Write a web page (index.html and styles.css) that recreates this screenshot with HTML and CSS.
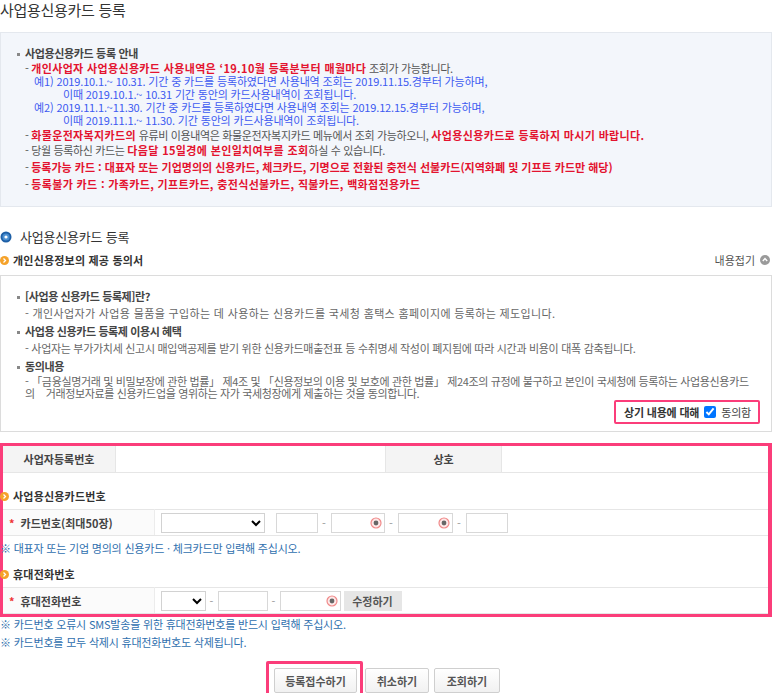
FILE: index.html
```html
<!DOCTYPE html>
<html lang="ko">
<head>
    <meta charset="UTF-8">
    <title>사업용신용카드 등록</title>
    <link rel="stylesheet" href="styles.css">
</head>
<body>
<div class="wrap">
    <h1 class="page-title">사업용신용카드 등록</h1>

    <!-- 안내 박스 -->
    <div class="notice-box">
        <p class="head"><span class="dot"></span>사업용신용카드 등록 안내</p>
        <ul class="dash-list">
            <li class="first">
                - <span class="red">개인사업자 사업용신용카드 사용내역은 ‘19.10월 등록분부터 매월마다</span> 조회가 가능합니다.
                <p class="blue">예1) 2019.10.1.~ 10.31. 기간 중 카드를 등록하였다면 사용내역 조회는 2019.11.15.경부터 가능하며,</p>
                <p class="blue indent">이때 2019.10.1.~ 10.31 기간 동안의 카드사용내역이 조회됩니다.</p>
                <p class="blue">예2) 2019.11.1.~11.30. 기간 중 카드를 등록하였다면 사용내역 조회는 2019.12.15.경부터 가능하며,</p>
                <p class="blue indent">이때 2019.11.1.~ 11.30. 기간 동안의 카드사용내역이 조회됩니다.</p>
            </li>
            <li>- <span class="red">화물운전자복지카드의</span> 유류비 이용내역은 화물운전자복지카드 메뉴에서 조회 가능하오니, <span class="red">사업용신용카드로 등록하지 마시기 바랍니다.</span></li>
            <li>- 당월 등록하신 카드는 <span class="red">다음달 15일경에 본인일치여부를 조회</span>하실 수 있습니다.</li>
            <li class="gap">- <span class="red tight">등록가능 카드 : 대표자 또는 기업명의의 신용카드, 체크카드, 기명으로 전환된 충전식 선불카드(지역화폐 및 기프트 카드만 해당)</span></li>
            <li class="gap">- <span class="red">등록불가 카드 : 가족카드, 기프트카드, 충전식선불카드, 직불카드, 백화점전용카드</span></li>
        </ul>
    </div>

    <h2 class="section-title">
        <svg width="12" height="12" viewBox="0 0 12 12"><circle cx="6" cy="6" r="5.5" fill="#1d5fa6"/><circle cx="6" cy="6" r="3.6" fill="#4b8fd0"/><circle cx="6" cy="6" r="1.6" fill="#fff"/></svg>
        사업용신용카드 등록
    </h2>

    <div class="sub-head">
        <h3 class="sub-title"><span class="orange-ico">
            <svg width="9" height="9" viewBox="0 0 9 9"><circle cx="4.5" cy="4.5" r="4.5" fill="#f5a22a"/><path d="M3.5 2.5 L5.5 4.5 L3.5 6.5" stroke="#fff" stroke-width="1.3" fill="none"/></svg>
        </span>개인신용정보의 제공 동의서</h3>
        <span class="fold">내용접기
            <svg width="10" height="10" viewBox="0 0 10 10"><circle cx="5" cy="5" r="5" fill="#9a9a9a"/><path d="M2.8 6 L5 3.6 L7.2 6" stroke="#fff" stroke-width="1.4" fill="none"/></svg>
        </span>
    </div>

    <!-- 동의서 -->
    <div class="consent-box">
        <p class="head"><span class="dot"></span>[사업용 신용카드 등록제]란?</p>
        <p class="desc wide">- 개인사업자가 사업용 물품을 구입하는 데 사용하는 신용카드를 국세청 홈택스 홈페이지에 등록하는 제도입니다.</p>
        <p class="head"><span class="dot"></span>사업용 신용카드 등록제 이용시 혜택</p>
        <p class="desc">- 사업자는 부가가치세 신고시 매입액공제를 받기 위한 신용카드매출전표 등 수취명세 작성이 폐지됨에 따라 시간과 비용이 대폭 감축됩니다.</p>
        <p class="head"><span class="dot"></span>동의내용</p>
        <p class="desc law">- 「금융실명거래 및 비밀보장에 관한 법률」 제4조 및 「신용정보의 이용 및 보호에 관한 법률」 제24조의 규정에 불구하고 본인이 국세청에 등록하는 사업용신용카드<br>의&nbsp;&nbsp;&nbsp; 거래정보자료를 신용카드업을 영위하는 자가 국세청장에게 제출하는 것을 동의합니다.</p>
        <div class="agree-row">
            <label class="agree">상기 내용에 대해 <input type="checkbox" checked> <span>동의함</span></label>
        </div>
    </div>

    <!-- 입력 폼 -->
    <div class="form-area">
        <table class="info-table">
            <tr>
                <th class="w-biz">사업자등록번호</th>
                <td class="w-biz-val"></td>
                <th class="w-name">상호</th>
                <td></td>
            </tr>
        </table>

        <h3 class="sub-title form-sub"><span class="orange-ico">
            <svg width="9" height="9" viewBox="0 0 9 9"><circle cx="4.5" cy="4.5" r="4.5" fill="#f5a22a"/><path d="M3.5 2.5 L5.5 4.5 L3.5 6.5" stroke="#fff" stroke-width="1.3" fill="none"/></svg>
        </span>사업용신용카드번호</h3>

        <table class="input-table">
            <tr>
                <th><span class="req">*</span>카드번호(최대50장)</th>
                <td>
                    <div class="field-row">
                        <select class="sel-card"><option></option></select>
                        <input class="inp w42" type="text">
                        <span class="sep">-</span>
                        <span class="pw-wrap w54"><input class="inp" type="text"><svg class="eye" width="12" height="12" viewBox="0 0 12 12"><circle cx="6" cy="6" r="5" fill="#fde8e8" stroke="#f08a8a" stroke-width="1.2"/><circle cx="6" cy="6" r="2.4" fill="#666"/></svg></span>
                        <span class="sep">-</span>
                        <span class="pw-wrap w55"><input class="inp" type="text"><svg class="eye" width="12" height="12" viewBox="0 0 12 12"><circle cx="6" cy="6" r="5" fill="#fde8e8" stroke="#f08a8a" stroke-width="1.2"/><circle cx="6" cy="6" r="2.4" fill="#666"/></svg></span>
                        <span class="sep">-</span>
                        <input class="inp w42" type="text">
                    </div>
                </td>
            </tr>
        </table>
        <p class="note in-box">※ 대표자 또는 기업 명의의 신용카드 · 체크카드만 입력해 주십시오.</p>

        <h3 class="sub-title form-sub phone"><span class="orange-ico">
            <svg width="9" height="9" viewBox="0 0 9 9"><circle cx="4.5" cy="4.5" r="4.5" fill="#f5a22a"/><path d="M3.5 2.5 L5.5 4.5 L3.5 6.5" stroke="#fff" stroke-width="1.3" fill="none"/></svg>
        </span>휴대전화번호</h3>

        <table class="input-table">
            <tr>
                <th><span class="req">*</span>휴대전화번호</th>
                <td>
                    <div class="field-row">
                        <select class="sel-phone"><option></option></select>
                        <span class="sep narrow">-</span>
                        <input class="inp w50" type="text">
                        <span class="sep narrow">-</span>
                        <span class="pw-wrap w61"><input class="inp" type="text"><svg class="eye" width="12" height="12" viewBox="0 0 12 12"><circle cx="6" cy="6" r="5" fill="#fde8e8" stroke="#f08a8a" stroke-width="1.2"/><circle cx="6" cy="6" r="2.4" fill="#666"/></svg></span>
                        <button type="button" class="btn-edit">수정하기</button>
                    </div>
                </td>
            </tr>
        </table>
    </div>

    <p class="note first">※ 카드번호 오류시 SMS발송을 위한 휴대전화번호를 반드시 입력해 주십시오.</p>
    <p class="note">※ 카드번호를 모두 삭제시 휴대전화번호도 삭제됩니다.</p>

    <div class="btn-area">
        <span class="btn-mark"><button type="button" class="btn b-reg">등록접수하기</button></span>
        <button type="button" class="btn b-cancel">취소하기</button>
        <button type="button" class="btn b-view">조회하기</button>
    </div>
</div>
</body>
</html>
```

FILE: styles.css
```css
body {
    margin: 0;
    font-family: "Noto Sans CJK KR", "Noto Sans", sans-serif;
    font-size: 11px;
    color: #555;
    background: #fff;
}

p, h1, h2, h3, ul {
    margin: 0;
    padding: 0;
}

.wrap {
    width: 772px;
}

.page-title {
    font-size: 15px;
    font-weight: normal;
    color: #333;
    line-height: 20px;
    letter-spacing: -0.3px;
}

/* 안내 박스 */
.notice-box {
    margin-top: 12px;
    height: 175px;
    box-sizing: border-box;
    background: #f3f6fb;
    border: 1px solid #e4e8ee;
    padding: 13px 0 0 16px;
    letter-spacing: -0.35px;
}

.notice-box .head {
    line-height: 14px;
    font-weight: bold;
    color: #444;
}

.dot {
    display: inline-block;
    width: 3px;
    height: 3px;
    background: #888;
    vertical-align: middle;
    margin: 0 5px 2px 0;
}

.dash-list {
    list-style: none;
    padding-left: 8px;
}

.dash-list li {
    line-height: 13px;
    margin-top: 2px;
}

.dash-list li.first {
    margin-top: 2px;
}

.dash-list li.gap {
    margin-top: 4px;
}

.dash-list p {
    padding-left: 9px;
}

.dash-list p.indent {
    padding-left: 38px;
}

.red {
    color: #e3132f;
    font-weight: bold;
    letter-spacing: 0.35px;
}

.red.tight {
    letter-spacing: 0;
}

.blue {
    color: #3d5af1;
    letter-spacing: -0.15px;
}

/* 섹션 제목 */
.section-title {
    margin-top: 22px;
    font-size: 13px;
    font-weight: normal;
    color: #333;
    line-height: 16px;
    display: flex;
    align-items: center;
    gap: 8px;
    letter-spacing: -0.2px;
}

.sub-head {
    margin-top: 7px;
    display: flex;
    justify-content: space-between;
    align-items: center;
}

.sub-title {
    font-size: 11px;
    font-weight: bold;
    color: #333;
    line-height: 14px;
    display: flex;
    align-items: center;
    letter-spacing: 0.2px;
}

.orange-ico {
    display: inline-flex;
    width: 13px;
}

.fold {
    display: flex;
    align-items: center;
    gap: 5px;
    color: #555;
    padding-right: 2px;
}

/* 동의서 */
.consent-box {
    margin-top: 7px;
    height: 157px;
    box-sizing: border-box;
    border: 1px solid #dcdcdc;
    padding: 13px 0 0 16px;
    letter-spacing: -0.2px;
}

.consent-box .head {
    line-height: 14px;
    font-weight: bold;
    color: #444;
    margin-top: 5px;
    letter-spacing: -0.4px;
}

.consent-box .head:first-child {
    margin-top: 0;
}

.consent-box .desc {
    line-height: 12px;
    padding-left: 8px;
    margin-top: 4px;
    color: #666;
    letter-spacing: -0.3px;
}

.consent-box .desc.wide {
    letter-spacing: 0.35px;
}

.consent-box .desc.law {
    margin-top: 2px;
    letter-spacing: -0.35px;
}

.agree-row {
    display: flex;
    justify-content: flex-end;
    padding-right: 11px;
    margin-top: 1px;
}

.agree {
    display: flex;
    align-items: center;
    gap: 5px;
    height: 20px;
    padding: 0 7px 0 8px;
    border: 2px solid #fb3d7a;
    border-radius: 2px;
    font-weight: bold;
    color: #333;
}

.agree input {
    margin: 0;
    width: 12px;
    height: 12px;
}

.agree span {
    font-weight: normal;
    color: #444;
}

/* 폼 영역 */
.form-area {
    margin-top: 11px;
    border: 3px solid #fb3d7a;
    border-right-width: 4px;
}

table {
    width: 100%;
    border-collapse: collapse;
}

.info-table th,
.info-table td {
    height: 26px;
    border-bottom: 1px solid #e6e6e6;
    padding: 0;
}

.info-table th {
    background: #f4f4f4;
    font-weight: bold;
    color: #444;
    border-left: 1px solid #e6e6e6;
    border-right: 1px solid #e6e6e6;
}

.info-table th:first-child {
    border-left: none;
}

.w-biz { width: 112px; }
.w-biz-val { width: 269px; }
.w-name { width: 115px; }

.form-sub {
    margin: 16px 0 0 -3px;
}

.form-sub.phone {
    margin-top: 12px;
}

.input-table {
    margin-top: 6px;
}

.input-table th,
.input-table td {
    height: 25px;
    border-top: 1px solid #e6e6e6;
    border-bottom: 1px solid #e6e6e6;
    padding: 0;
}

.input-table th {
    width: 151px;
    text-align: left;
    padding-left: 6px;
    font-weight: bold;
    color: #444;
    background: #fbfbfb;
    border-right: 1px solid #ececec;
    box-sizing: border-box;
}

.req {
    color: #e33;
    margin-right: 6px;
}

.field-row {
    display: flex;
    align-items: center;
    padding-left: 6px;
}

select {
    height: 20px;
    border: 1px solid #d2d2d2;
    border-radius: 0;
    background: #fff;
    font-size: 11px;
    padding: 0;
}

.sel-card {
    width: 104px;
    margin-right: 11px;
}

.sel-phone {
    width: 45px;
}

.inp {
    height: 20px;
    box-sizing: border-box;
    border: 1px solid #d8d8d8;
    padding: 0 3px;
    font-size: 11px;
}

.w42 { width: 42px; }
.w50 { width: 50px; }

.sep {
    width: 13px;
    text-align: center;
    color: #999;
}

.sep.narrow {
    width: 12px;
}

.pw-wrap {
    position: relative;
    display: inline-flex;
}

.pw-wrap .inp {
    width: 100%;
}

.pw-wrap .eye {
    position: absolute;
    right: 3px;
    top: 4px;
}

.w54 { width: 54px; }
.w55 { width: 55px; }
.w61 { width: 61px; }

.btn-edit {
    margin-left: 3px;
    height: 20px;
    width: 58px;
    border: none;
    background: #e6e6e6;
    font-family: inherit;
    font-size: 11px;
    font-weight: bold;
    color: #555;
    padding: 0;
}

.note {
    color: #2f6fae;
    line-height: 14px;
    margin-top: 4px;
    letter-spacing: -0.2px;
}

.note.first {
    margin-top: 0;
}

.note.in-box {
    margin: 5px 0 0 -3px;
}

.btn-area {
    margin-top: 19px;
    display: flex;
    justify-content: center;
    align-items: center;
    padding-right: 6px;
}

.btn-mark {
    display: inline-flex;
    padding: 4px 3px 1px 5px;
    border: 3px solid #fb3d7a;
    border-radius: 2px;
    margin: -7px 2px -4px 0;
}

.btn {
    height: 25px;
    padding: 0;
    border: 1px solid #cfcfcf;
    border-radius: 2px;
    background: linear-gradient(#fff, #f1f1f1);
    font-family: inherit;
    font-size: 11px;
    font-weight: bold;
    color: #555;
}

.b-reg { width: 83px; }
.b-cancel { width: 64px; margin-right: 5px; }
.b-view { width: 66px; }
```
